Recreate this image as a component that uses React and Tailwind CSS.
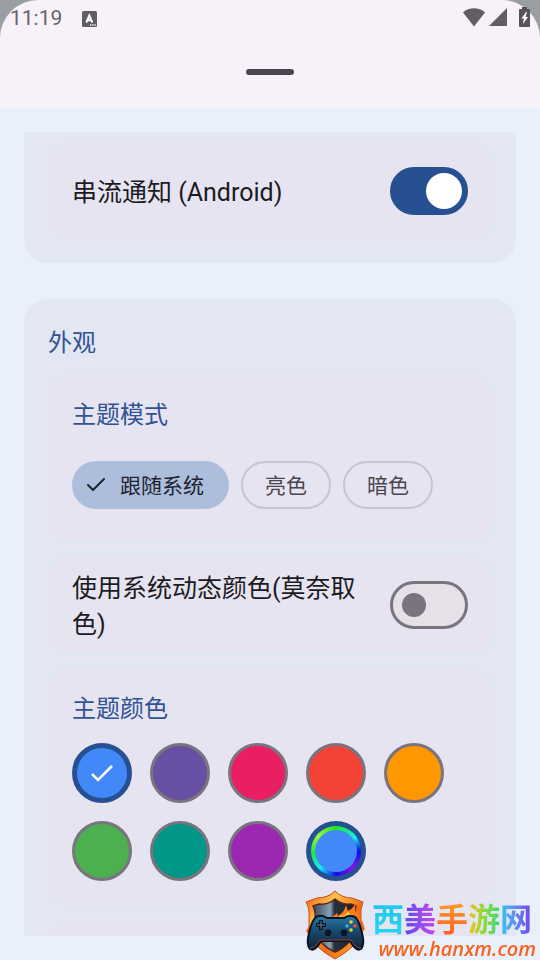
import { useState } from "react";
import { Check } from "lucide-react";

const modes = [
  { id: "system", label: "跟随系统" },
  { id: "light", label: "亮色" },
  { id: "dark", label: "暗色" },
];

const swatches = [
  { id: "blue", name: "蓝色", className: "bg-[#4388f8]" },
  { id: "violet", name: "紫罗兰", className: "bg-[#6750a4]" },
  { id: "pink", name: "粉色", className: "bg-[#e91e63]" },
  { id: "red", name: "红色", className: "bg-[#f44336]" },
  { id: "orange", name: "橙色", className: "bg-[#ff9800]" },
  { id: "green", name: "绿色", className: "bg-[#4caf50]" },
  { id: "teal", name: "青色", className: "bg-[#009688]" },
  { id: "purple", name: "紫色", className: "bg-[#9c27b0]" },
];

const StatusBar = () => (
  <div className="flex h-[38px] items-center justify-between px-[10px] text-[21px] text-[#66636a]">
    <div className="flex items-center gap-5">
      <span>11:19</span>
      <svg width="16" height="16" viewBox="0 0 16 16" aria-hidden="true">
        <rect width="15" height="16" rx="1.5" fill="#605d64" />
        <path d="M4.300 11.500 7.300 4.500l3 7M5.500 9.300h3.600" fill="none" stroke="#fff" strokeWidth="2" />
        <path d="M8 14h1.3M10.3 14h1.3M12.6 14h1.2" stroke="#fff" strokeWidth="1.3" />
      </svg>
    </div>
    <div className="flex items-center pb-1">
      <svg width="22" height="19" viewBox="0 0 22 19" className="mr-1" aria-hidden="true">
        <path d="M0 4.5C6-1.1 16-1.1 22 4.5L11 18.5Z" fill="#605d64" />
      </svg>
      <svg width="18" height="18" viewBox="0 0 18 18" className="mr-3" aria-hidden="true">
        <path d="M18 0V18H0Z" fill="#605d64" />
      </svg>
      <svg width="11" height="20" viewBox="0 0 11 20" aria-hidden="true">
        <path d="M3 0h5v2h2q1 0 1 1v16q0 1-1 1H1q-1 0-1-1V3q0-1 1-1h2Z" fill="#57555b" />
        <path d="M7 5 2.5 11.5h2.3L4 17l5-7H6.5L8 5Z" fill="#fff" />
      </svg>
    </div>
  </div>
);

const Panel = ({ className = "", children }) => (
  <div className={`rounded-3xl bg-[#e6e4f0] px-6 ${className}`}>{children}</div>
);

const SwitchRow = ({ id, label, checked, onChange, className }) => (
  <Panel className={`flex items-center justify-between gap-8 ${className}`}>
    <label htmlFor={id} className="pt-1 text-[25px] leading-9 text-[#1c1b1f]">
      {label}
    </label>
    <input
      id={id}
      type="checkbox"
      role="switch"
      checked={checked}
      onChange={(e) => onChange(e.target.checked)}
      className="flex h-12 w-[78px] shrink-0 appearance-none items-center rounded-full border-3 border-[#79747e] bg-[#e6e0e9] px-[9px] before:size-6 before:rounded-full before:bg-[#79747e] checked:justify-end checked:border-[#265092] checked:bg-[#265092] checked:px-[3px] checked:before:size-9 checked:before:bg-white"
    />
  </Panel>
);

const ShieldLogo = () => (
  <svg width="64" height="70" viewBox="0 0 64 70" aria-hidden="true">
    <defs>
      <linearGradient id="rim" x1="0" y1="0" x2="1" y2="1">
        <stop offset="0" stopColor="#f0561a" />
        <stop offset="0.3" stopColor="#ffc24a" />
        <stop offset="0.6" stopColor="#f26a12" />
        <stop offset="1" stopColor="#ffb52e" />
      </linearGradient>
      <linearGradient id="plate" x1="0" y1="0" x2="1" y2="0">
        <stop offset="0" stopColor="#34475a" />
        <stop offset="0.4" stopColor="#8aa1b1" />
        <stop offset="0.5" stopColor="#26323f" />
        <stop offset="1" stopColor="#18202c" />
      </linearGradient>
      <linearGradient id="pad" x1="0" y1="0" x2="0" y2="1">
        <stop offset="0" stopColor="#2779a8" />
        <stop offset="0.5" stopColor="#174568" />
        <stop offset="1" stopColor="#0d2038" />
      </linearGradient>
    </defs>
    <path d="M6 34 2 41l5 6-1 5 8-4M58 30l3 9-4 5 1 6-8-3" fill="#f26a12" />
    <path d="M31 1Q38 8 48 8l11 4q-3 7-2 17 1 17-8 27-7 7-18 13-11-6-18-13-9-10-8-27 1-10-3-17l11-4Q24 8 31 1Z" fill="url(#rim)" stroke="#c9481a" strokeWidth="1" />
    <path d="M31 9q7 6 16 5l5 2q-2 6-1 14 1 14-6 22-5 6-14 10-9-4-14-10-7-8-6-22 1-8-2-14l6-2q9 1 16-5Z" fill="url(#plate)" stroke="#5a2414" strokeWidth="1.5" />
    <path d="M21 29q8-1 12-6l1 3q6-3 8-11l2 6q6-3 8-9-2 8 0 11l3-2q-3 5-4 10Z" fill="#ff7d17" />
    <path d="M28 29q6 0 9-4l1 2q5-3 6-6 1 4 5 3-2 3-1 6Z" fill="#ffd04a" />
    <path d="M12 27q6-3 11 1h17q5-4 11-1 4 3 7 16 3 12-1 16-5 3-11-8H17Q11 62 6 59q-4-4-1-16 3-13 7-16Z" fill="url(#pad)" stroke="#081321" strokeWidth="2" />
    <path d="M6 58q4 1 10-8h31q6 9 10 8" fill="none" stroke="#a03c3a" strokeWidth="1" />
    <path d="M17 30v10M12 35h10" stroke="#091421" strokeWidth="4" />
    <path d="M17 31v8M13 35h8" stroke="#5f7f94" strokeWidth="1" />
    <circle cx="24" cy="43" r="4" fill="#0a1727" stroke="#24465e" />
    <circle cx="40" cy="43" r="4" fill="#0a1727" stroke="#24465e" />
    <circle cx="47" cy="32" r="1.800" fill="#ffc533" />
    <circle cx="43" cy="36" r="1.800" fill="#29b8db" />
    <circle cx="51" cy="36" r="1.800" fill="#ef4e35" />
    <circle cx="47" cy="40" r="1.800" fill="#d9d83c" />
  </svg>
);

const Watermark = () => (
  <div className="pointer-events-none fixed bottom-0 right-1 flex items-end gap-1">
    <ShieldLogo />
    <div className="flex flex-col items-end">
      <div className="mr-1 flex text-[32px] font-bold leading-9 text-transparent">
        <span className="bg-linear-to-b from-[#22c5ee] to-[#24d8f2] bg-clip-text">西</span>
        <span className="bg-linear-to-r from-[#5945f5] to-[#cb42ee] bg-clip-text">美</span>
        <span className="bg-linear-to-b from-[#ff9b25] to-[#ff5722] bg-clip-text">手</span>
        <span className="bg-linear-to-r from-[#f4bc19] via-[#8ad936] to-[#35d77a] bg-clip-text">游</span>
        <span className="bg-linear-to-r from-[#20c5ef] to-[#7138ee] bg-clip-text">网</span>
      </div>
      <div className="font-['Open_Sans',sans-serif] text-[20px] font-semibold italic leading-[22px] text-[#f8631e]">
        www.hanxm.com
      </div>
    </div>
  </div>
);

export default function App() {
  const [notify, setNotify] = useState(true);
  const [dynamicColor, setDynamicColor] = useState(false);
  const [mode, setMode] = useState("system");
  const [color, setColor] = useState("blue");

  return (
    <div className="flex h-screen flex-col bg-[#e8f0fc] font-['Roboto','Noto_Sans_CJK_SC',sans-serif]">
      {/* Status bar and sheet handle */}
      <header className="bg-[#9a9fa3]">
        <div className="h-[108px] rounded-t-[38px] bg-[#f7f2fa]">
          <StatusBar />
          <div className="flex h-[68px] items-center justify-center">
            <div className="h-[6px] w-12 rounded-full bg-[#49454f]" />
          </div>
        </div>
      </header>

      <main className="m-6 flex min-h-0 flex-1 flex-col gap-9 overflow-hidden">
        <section className="shrink-0 rounded-b-3xl bg-[#e2e7f3] px-6 pb-6 pt-[11px]">
          <SwitchRow
            id="notify"
            label="串流通知 (Android)"
            checked={notify}
            onChange={setNotify}
            className="py-6"
          />
        </section>

        {/* Appearance */}
        <section className="shrink-0 rounded-3xl bg-[#e2e7f3] p-6">
          <h2 className="mb-3 text-2xl leading-10 text-[#315394]">外观</h2>
          <div className="flex flex-col gap-4">
            <Panel className="pb-8 pt-6">
              <h3 className="mb-[30px] text-2xl leading-8 text-[#315394]">主题模式</h3>
              <div className="flex gap-3">
                {modes.map(({ id, label }) => (
                  <button
                    key={id}
                    type="button"
                    aria-pressed={mode === id}
                    onClick={() => setMode(id)}
                    className={`flex h-12 items-center rounded-full text-[21px] ${
                      mode === id
                        ? "gap-3 bg-[#acbedc] pl-3 pr-[25px] text-[#1d2430]"
                        : "border-2 border-[#c8c5d0] px-[22px] text-[#49454f]"
                    }`}
                  >
                    {mode === id && <Check size={24} strokeWidth={2} />}
                    <span className="pt-1">{label}</span>
                  </button>
                ))}
              </div>
            </Panel>

            <SwitchRow
              id="dynamic-color"
              label="使用系统动态颜色(莫奈取色)"
              checked={dynamicColor}
              onChange={setDynamicColor}
              className="py-[10px]"
            />

            <Panel className="py-6">
              <h3 className="mb-[18px] text-2xl leading-8 text-[#315394]">主题颜色</h3>
              <div className="flex flex-wrap gap-[18px]">
                {swatches.map((item) => (
                  <label key={item.id} className="grid size-15 place-items-center">
                    <input
                      type="radio"
                      name="color"
                      aria-label={item.name}
                      checked={color === item.id}
                      onChange={() => setColor(item.id)}
                      className={`col-start-1 row-start-1 size-15 appearance-none rounded-full border-3 border-[#79747e] checked:border-5 checked:border-[#265092] ${item.className}`}
                    />
                    {color === item.id && (
                      <svg
                        width="24"
                        height="20"
                        viewBox="0 0 24 20"
                        className="pointer-events-none z-10 col-start-1 row-start-1"
                        aria-hidden="true"
                      >
                        <path d="M2 11 8 17 22 3" fill="none" stroke="#fff" strokeWidth="2.500" />
                      </svg>
                    )}
                  </label>
                ))}
                {/* Custom colour picker */}
                <button
                  type="button"
                  aria-label="自定义颜色"
                  className="size-15 rounded-full bg-[#265092] p-[5px]"
                >
                  <span className="block size-full rounded-full bg-[conic-gradient(#1ee61e,#14f0f0_55deg,#0a10e0_90deg,#8a10f0_135deg,#1010e0_180deg,#14e8f8_222deg,#20e840_265deg,#9cf53c_310deg,#1ee61e)] p-1">
                    <span className="block size-full rounded-full bg-[#4388f8]" />
                  </span>
                </button>
              </div>
            </Panel>

            <Panel className="h-24" />
          </div>
        </section>
      </main>

      <Watermark />
    </div>
  );
}
